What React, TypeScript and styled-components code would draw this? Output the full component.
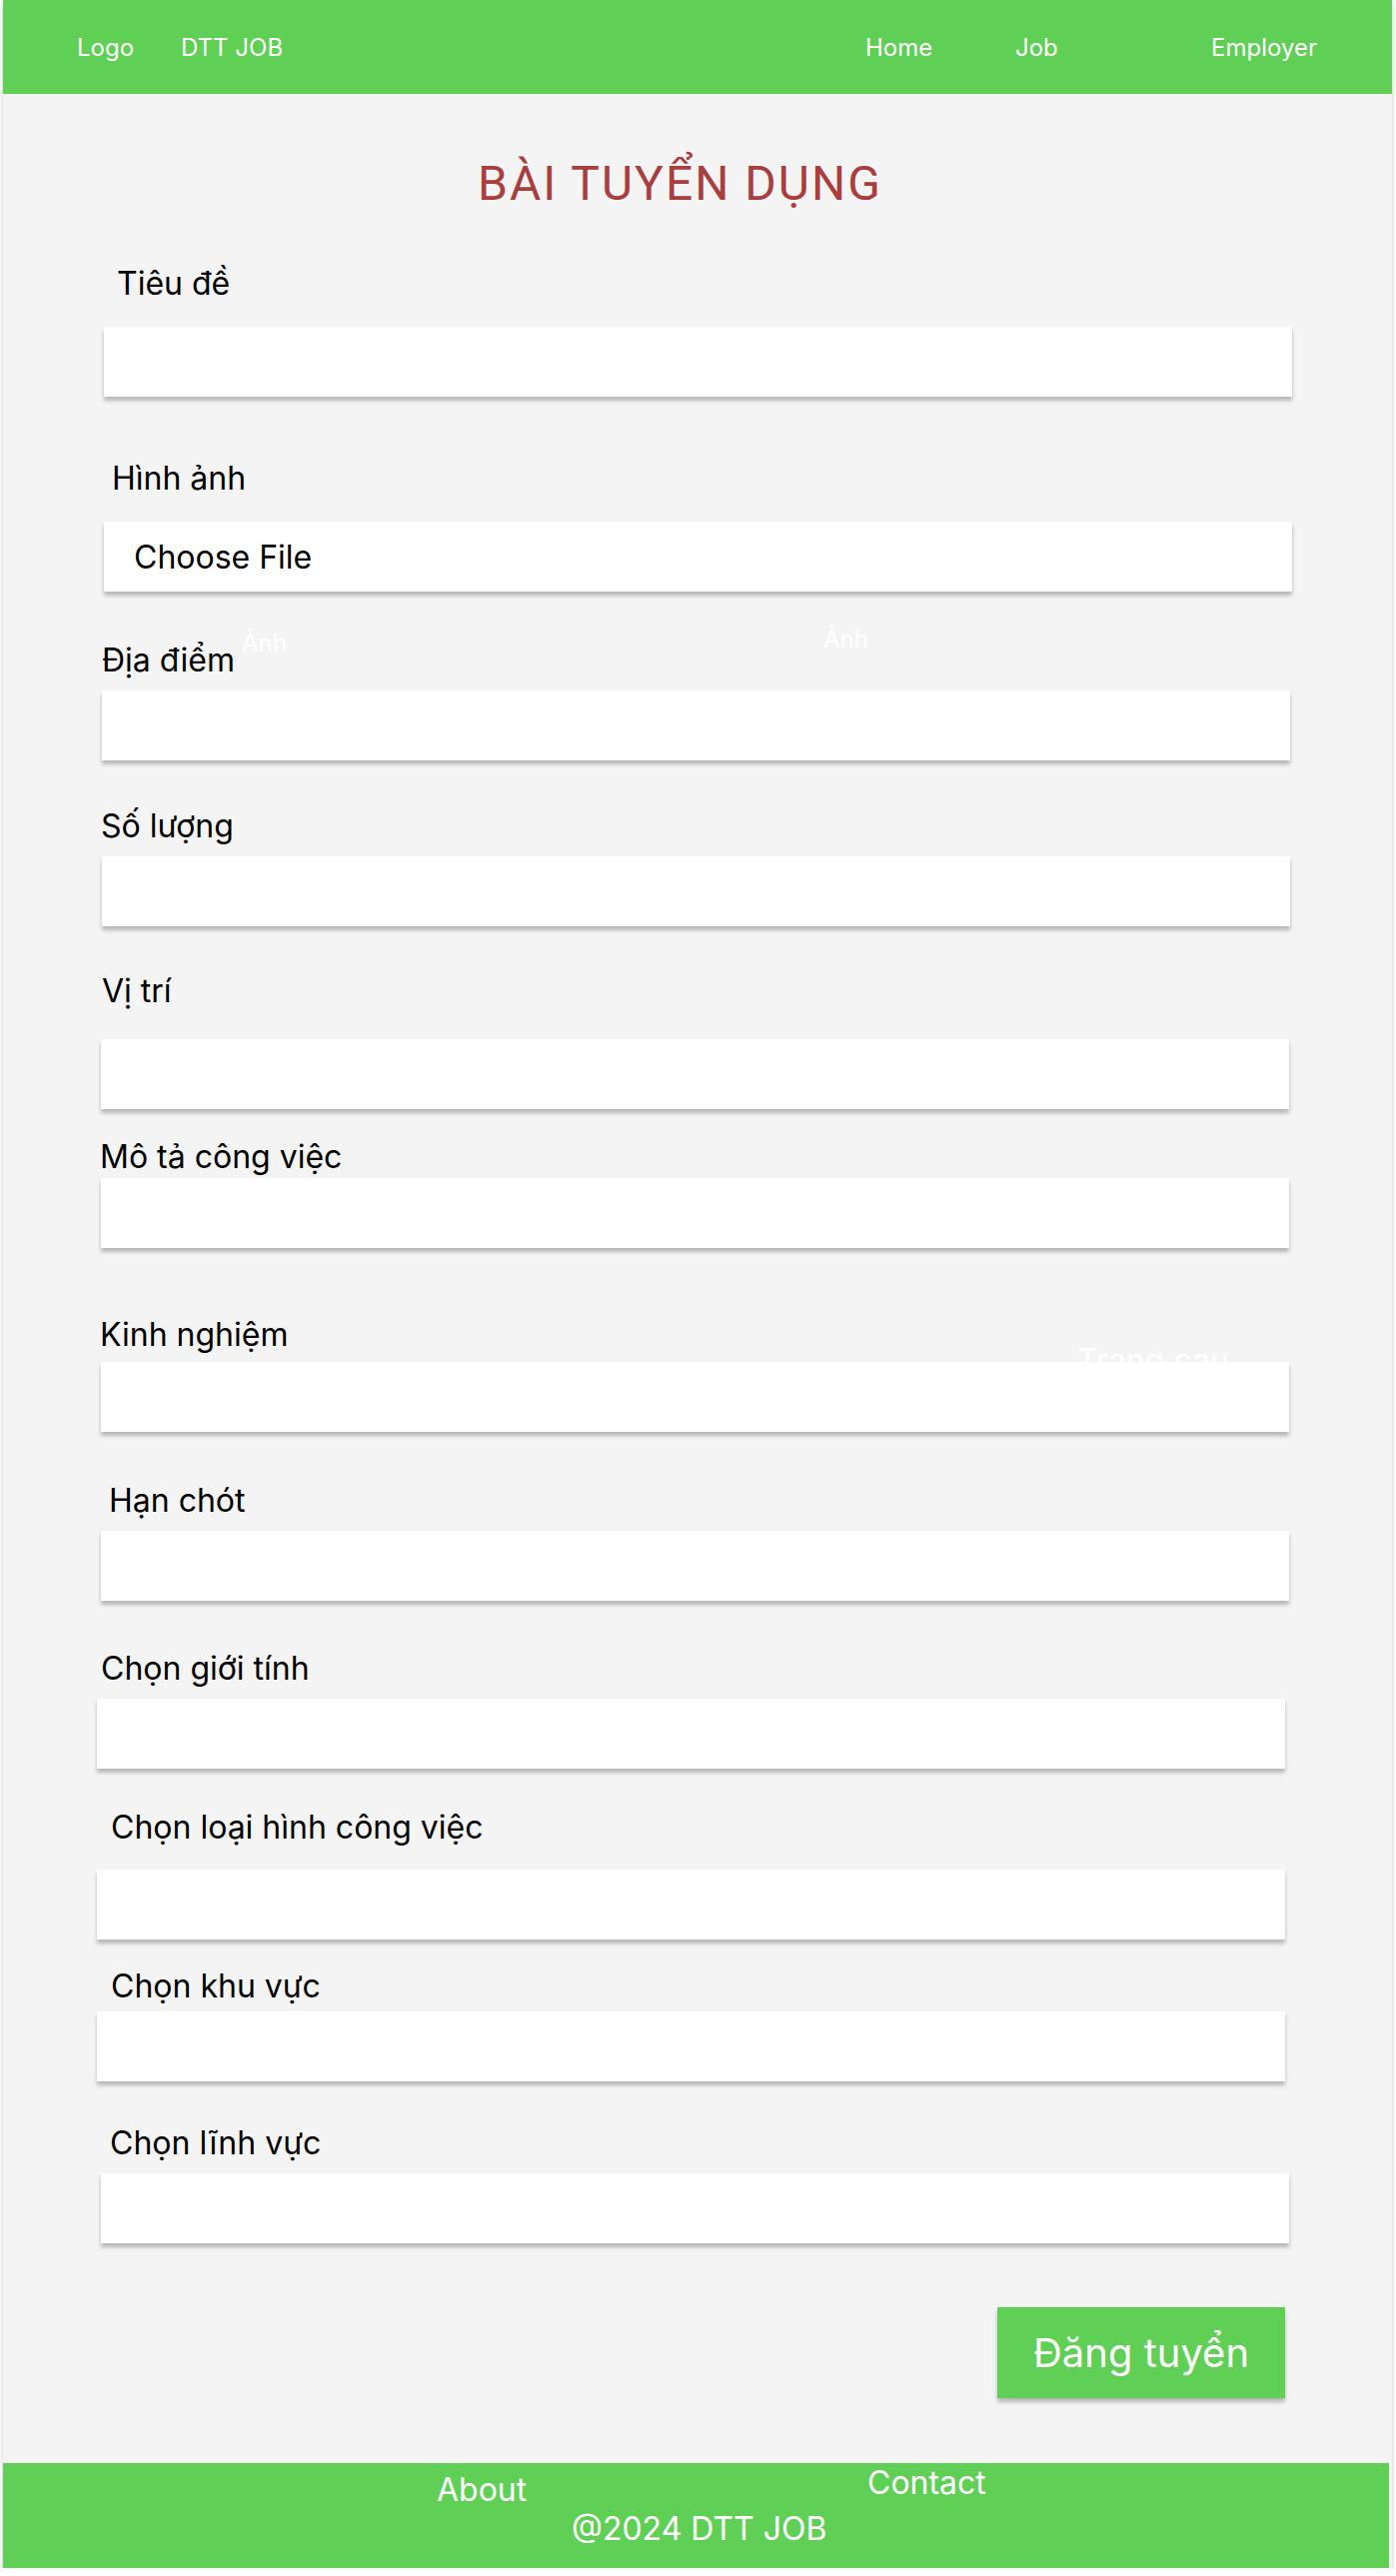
import React from "react";
import styled, { createGlobalStyle } from "styled-components";

const GlobalStyle = createGlobalStyle`
  html, body {
    margin: 0;
    padding: 0;
    background: #ffffff;
  }
  body {
    font-family: Inter, "Noto Sans", "Liberation Sans", sans-serif;
    color: #000;
  }
  * { box-sizing: border-box; }
`;

const GREEN = "#60cf55";

const Frame = styled.div`
  position: relative;
  margin-left: 3px;
  width: 1390px;
  background: #f4f4f4;
  display: flex;
  flex-direction: column;
  box-shadow: 0 4px 4px rgba(0, 0, 0, 0.25);
`;

const Header = styled.header`
  height: 94px;
  background: ${GREEN};
  display: grid;
  grid-template-columns: 789px auto;
  align-items: center;
  padding-left: 74px;
`;

const Brand = styled.div`
  display: grid;
  grid-template-columns: 104px auto;
  align-items: center;
`;

const Nav = styled.nav`
  display: grid;
  grid-template-columns: 150px 196px auto;
  align-items: center;
`;

const HeaderText = styled.span`
  font-family: Inter, "Noto Sans", sans-serif;
  font-size: 24px;
  line-height: 29px;
  color: #ffffff;
  white-space: nowrap;
`;

const Main = styled.main`
  display: flex;
  flex-direction: column;
  padding-left: 94px;
  padding-bottom: 65px;
`;

const Title = styled.h1`
  margin: 62px 0 0;
  width: 1167px;
  text-align: center;
  font-family: Roboto, "Noto Sans", sans-serif;
  font-weight: 400;
  font-size: 48px;
  line-height: 56px;
  letter-spacing: 2px;
  color: #a83e3e;
`;

const Field = styled.div<{ $mt: number }>`
  display: flex;
  flex-direction: column;
  margin-top: ${(p) => p.$mt}px;
`;

const Label = styled.label<{ $x: number }>`
  padding-left: ${(p) => p.$x}px;
  font-size: 32px;
  line-height: 39px;
  font-weight: 400;
  color: #000;
  white-space: nowrap;
`;

const Box = styled.input<{ $x: number; $gap: number }>`
  position: relative;
  z-index: 1;
  display: block;
  margin: ${(p) => p.$gap}px 0 0 ${(p) => p.$x}px;
  width: 1189px;
  height: 70px;
  border: none;
  outline: none;
  background: #ffffff;
  box-shadow: 0 4px 4px rgba(0, 0, 0, 0.25);
  font-family: Inter, sans-serif;
  font-size: 24px;
  padding: 0 20px;
`;

const FileBox = styled.label<{ $x: number; $gap: number }>`
  position: relative;
  z-index: 1;
  display: flex;
  align-items: center;
  margin: ${(p) => p.$gap}px 0 0 ${(p) => p.$x}px;
  width: 1189px;
  height: 70px;
  padding-left: 30px;
  background: #ffffff;
  box-shadow: 0 4px 4px rgba(0, 0, 0, 0.25);
  font-size: 32px;
  line-height: 39px;
  color: #000;
  cursor: pointer;

  input {
    display: none;
  }
`;

const ButtonRow = styled.div`
  display: flex;
  justify-content: flex-end;
  margin-top: 64px;
  padding-right: 107px;
`;

const SubmitButton = styled.button`
  width: 288px;
  height: 91px;
  border: none;
  background: ${GREEN};
  color: #ffffff;
  font-family: Inter, sans-serif;
  font-size: 40px;
  font-weight: 400;
  box-shadow: 0 4px 4px rgba(0, 0, 0, 0.25);
  cursor: pointer;
`;

const Ghost = styled.span<{ $size: number }>`
  position: absolute;
  z-index: 0;
  color: #ffffff;
  font-size: ${(p) => p.$size}px;
  line-height: ${(p) => Math.round(p.$size * 1.21)}px;
  white-space: nowrap;
  pointer-events: none;
`;

const Footer = styled.footer`
  width: 1387px;
  height: 105px;
  background: ${GREEN};
  display: flex;
  flex-direction: column;
`;

const FooterTop = styled.div`
  display: grid;
  grid-template-columns: 431px auto;
  align-items: start;
  padding-left: 434px;
`;

const FooterText = styled.span<{ $drop?: number }>`
  margin-top: ${(p) => p.$drop ?? 0}px;
  font-size: 32px;
  line-height: 39px;
  color: #ffffff;
  white-space: nowrap;
`;

const Copyright = styled.div`
  padding-left: 569px;
  font-size: 32px;
  line-height: 39px;
  color: #ffffff;
  white-space: nowrap;
`;

type FieldDef = {
  label: string;
  mt: number;
  lx: number;
  gap: number;
  bx: number;
  file?: boolean;
};

const fields: FieldDef[] = [
  { label: "Tiêu đề", mt: 52, lx: 20, gap: 24, bx: 7 },
  { label: "Hình ảnh", mt: 62, lx: 15, gap: 24, bx: 7, file: true },
  { label: "Địa điểm", mt: 49, lx: 5, gap: 11, bx: 5 },
  { label: "Số lượng", mt: 46, lx: 4, gap: 11, bx: 5 },
  { label: "Vị trí", mt: 45, lx: 5, gap: 29, bx: 4 },
  { label: "Mô tả công việc", mt: 28, lx: 3, gap: 2, bx: 4 },
  { label: "Kinh nghiệm", mt: 67, lx: 3, gap: 8, bx: 4 },
  { label: "Hạn chót", mt: 49, lx: 12, gap: 11, bx: 4 },
  { label: "Chọn giới tính", mt: 48, lx: 4, gap: 11, bx: 0 },
  { label: "Chọn loại hình công việc", mt: 39, lx: 14, gap: 23, bx: 0 },
  { label: "Chọn khu vực", mt: 27, lx: 14, gap: 6, bx: 0 },
  { label: "Chọn lĩnh vực", mt: 42, lx: 13, gap: 11, bx: 4 },
];

export default function App() {
  return (
    <>
      <GlobalStyle />
      <Frame>
        <Header>
          <Brand>
            <HeaderText>Logo</HeaderText>
            <HeaderText>DTT JOB</HeaderText>
          </Brand>
          <Nav>
            <HeaderText>Home</HeaderText>
            <HeaderText>Job</HeaderText>
            <HeaderText>Employer</HeaderText>
          </Nav>
        </Header>

        <Main>
          <Title>BÀI TUYỂN DỤNG</Title>
          {fields.map((f, i) => (
            <Field key={i} $mt={f.mt}>
              <Label $x={f.lx} htmlFor={`field-${i}`}>
                {f.label}
              </Label>
              {f.file ? (
                <FileBox $x={f.bx} $gap={f.gap}>
                  Choose File
                  <input id={`field-${i}`} type="file" />
                </FileBox>
              ) : (
                <Box id={`field-${i}`} $x={f.bx} $gap={f.gap} type="text" />
              )}
            </Field>
          ))}
          <ButtonRow>
            <SubmitButton type="button">Đăng tuyển</SubmitButton>
          </ButtonRow>
        </Main>

        <Footer>
          <FooterTop>
            <FooterText $drop={7}>About</FooterText>
            <FooterText>Contact</FooterText>
          </FooterTop>
          <Copyright>@2024 DTT JOB</Copyright>
        </Footer>

        <Ghost $size={24} style={{ left: 239, top: 629 }}>Ảnh</Ghost>
        <Ghost $size={24} style={{ left: 821, top: 625 }}>Ảnh</Ghost>
        <Ghost $size={32} style={{ left: 1075, top: 1342 }}>Trang cau</Ghost>
      </Frame>
    </>
  );
}
